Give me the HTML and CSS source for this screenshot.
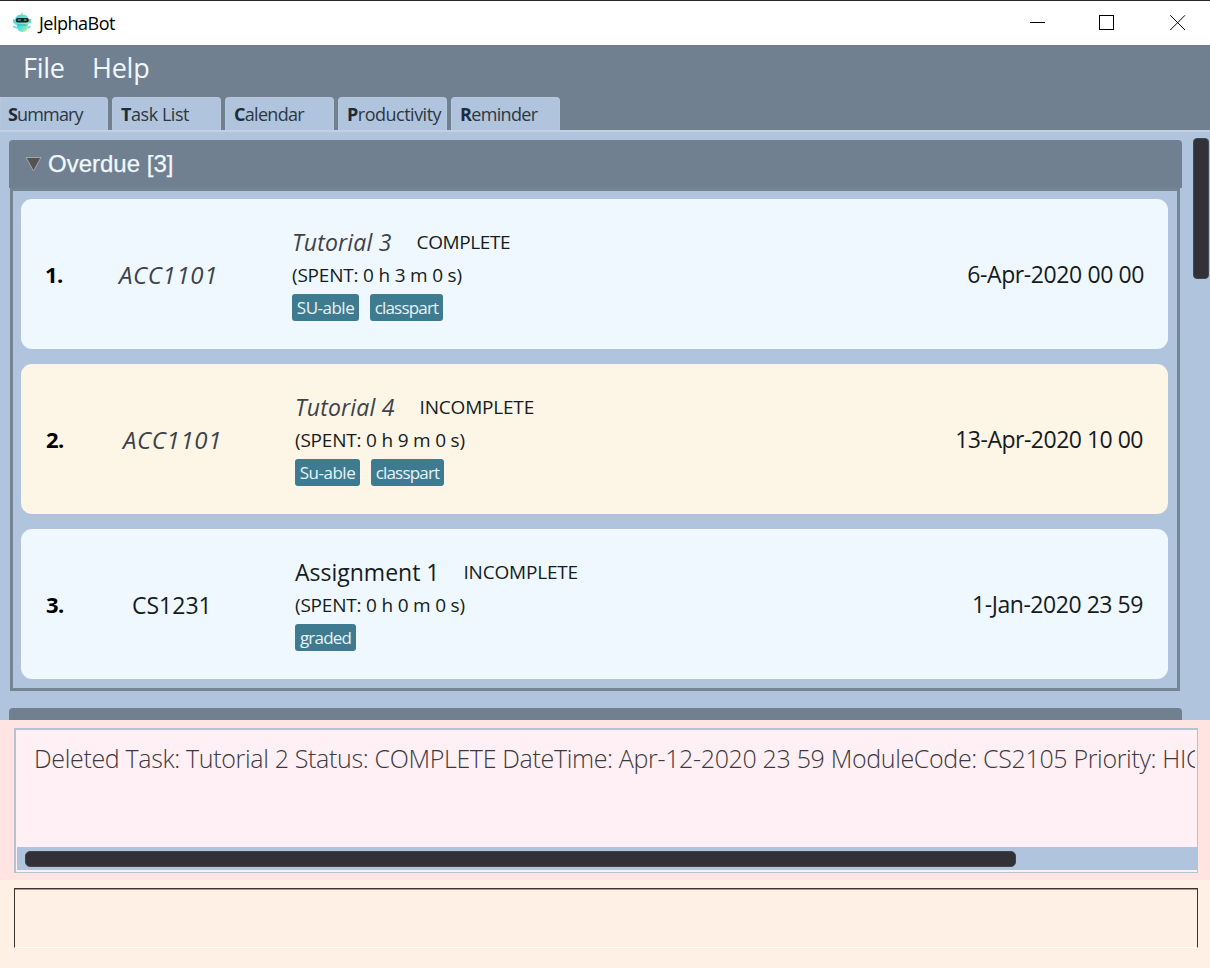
FILE: index.html
```html
<!DOCTYPE html>
<html lang="en">
<head>
<meta charset="utf-8">
<title>JelphaBot</title>
<link rel="stylesheet" href="styles.css">
</head>
<body>
<div class="window">
  <header class="titlebar">
    <svg class="logo" viewBox="0 0 20 23" width="20" height="23">
      <defs>
        <linearGradient id="bot" x1="0" y1="0" x2="1" y2="0.7">
          <stop offset="0" stop-color="#43cfe2"/>
          <stop offset="0.55" stop-color="#62e2cf"/>
          <stop offset="1" stop-color="#a9ef9d"/>
        </linearGradient>
      </defs>
      <path d="M9.200 1.500h1.600v3H9.200z" fill="#b6ed9a"/>
      <path d="M3 10c0-4.500 3-6.500 7-6.500s7 2 7 6.500v3.500H3z" fill="url(#bot)"/>
      <path d="M.8 8.500h2.400v4H1.500zM17 8h2v4h-2z" fill="#55d5dc"/>
      <rect x="3.800" y="7" width="13" height="4.600" rx="2" fill="#14242b"/>
      <path d="M5.800 9h3M12 9h2.500" stroke="#a8c4c8" stroke-width="1"/>
      <path d="M4.500 13h11.500c0 5-2 8-5.500 8s-6-3-6-8z" fill="url(#bot)"/>
      <path d="M1 15.500l4 1.500M15.500 17l3-1.500" stroke="#62dbe2" stroke-width="1.500"/>
      <path d="M5.500 14h9" stroke="#2cb5c8" stroke-width="1"/>
    </svg>
    <span class="app-name">JelphaBot</span>
    <svg class="controls" viewBox="0 0 156 16" width="156" height="16" fill="none" stroke="#000" stroke-width="1">
      <path d="M0 7.500h15"/>
      <rect x="69.500" y="0.500" width="14" height="14"/>
      <path d="M140.300 .3l14.700 14.700M155 .3L140.300 15"/>
    </svg>
  </header>
  <nav class="menubar"><span class="menu-file">File</span><span class="menu-help">Help</span></nav>
  <nav class="tabs">
    <div class="tab tab-first"><span class="t-summary"><b>S</b>ummary</span></div>
    <div class="tab"><span class="t-tasks"><b>T</b>ask List</span></div>
    <div class="tab"><span class="t-calendar"><b>C</b>alendar</span></div>
    <div class="tab"><span class="t-productivity"><b>P</b>roductivity</span></div>
    <div class="tab"><span class="t-reminder"><b>R</b>eminder</span></div>
  </nav>
  <main class="content">
    <div class="panels">
      <section class="panel">
        <h2 class="panel-head">
          <svg class="arrow" viewBox="0 0 17 16" width="17" height="16"><path d="M1 1.500h15L8.500 15z" fill="#555453" stroke="#a2a6a9" stroke-width="1"/></svg>
          <span>Overdue [3]</span>
        </h2>
        <div class="panel-body">
          <article class="card card-shift">
            <div class="num">1.</div>
            <div class="code low">ACC1101</div>
            <div class="info">
              <div class="line"><span class="title low">Tutorial 3</span><span class="status done">COMPLETE</span></div>
              <div class="spent">(SPENT: 0 h 3 m 0 s)</div>
              <div class="tags"><span class="tag w67">SU-able</span><span class="tag w73">classpart</span></div>
            </div>
            <time class="date">6-Apr-2020 00 00</time>
          </article>
          <article class="card card-cream">
            <div class="num">2.</div>
            <div class="code low">ACC1101</div>
            <div class="info">
              <div class="line"><span class="title low">Tutorial 4</span><span class="status">INCOMPLETE</span></div>
              <div class="spent">(SPENT: 0 h 9 m 0 s)</div>
              <div class="tags"><span class="tag w65">Su-able</span><span class="tag w73">classpart</span></div>
            </div>
            <time class="date">13-Apr-2020 10 00</time>
          </article>
          <article class="card">
            <div class="num">3.</div>
            <div class="code">CS1231</div>
            <div class="info">
              <div class="line"><span class="title">Assignment 1</span><span class="status">INCOMPLETE</span></div>
              <div class="spent">(SPENT: 0 h 0 m 0 s)</div>
              <div class="tags"><span class="tag w61">graded</span></div>
            </div>
            <time class="date">1-Jan-2020 23 59</time>
          </article>
        </div>
      </section>
      <div class="next-head"></div>
    </div>
    <div class="vbar"><div class="vthumb"></div></div>
  </main>
  <section class="result">
    <div class="result-box">
      <div class="message"><span>Deleted Task: Tutorial 2 Status: COMPLETE DateTime: Apr-12-2020 23 59 ModuleCode: CS2105 Priority: HIG</span></div>
      <div class="hbar"><div class="hthumb"></div></div>
    </div>
  </section>
  <footer class="command"><div class="command-input"></div></footer>
</div>
</body>
</html>
```
FILE: styles.css
```css
* { box-sizing: border-box; }
body { margin: 0; font-family: "Open Sans", "Noto Sans", sans-serif; }
.window { width: 1210px; height: 968px; overflow: hidden; display: flex; flex-direction: column; background: #fff0e6; white-space: nowrap; }
.titlebar { height: 45px; background: #fff; border-top: 1px solid #2a2226; display: flex; align-items: flex-start; padding-left: 12px; flex: none; }
.logo { margin-top: 10px; }
.app-name { margin: 9px 0 0 7px; font-size: 18px; line-height: 26px; letter-spacing: -0.5px; color: #000; }
.controls { margin: 14px 24px 0 auto; }
.menubar { height: 52px; flex: none; background: #708090; color: #f0f8ff; font-size: 27px; line-height: 46px; padding-left: 23px; display: flex; gap: 27px; letter-spacing: -0.25px; }
.menu-file { width: 42px; }
.tabs { height: 33px; flex: none; background: #708090; display: flex; gap: 4px; }
.tab { width: 109px; height: 33px; background: #b0c4de; border-radius: 4px 4px 0 0; border: 1px solid #b8c8dc; border-bottom: 0; padding-left: 8px; font-size: 18px; line-height: 32px; color: #2d3742; }
.tab-first { width: 108px; padding-left: 7px; border-top-left-radius: 0; }
.tab b { font-weight: 700; color: #202b36; }
.t-summary { letter-spacing: -0.85px; }
.t-tasks { letter-spacing: -0.45px; }
.t-calendar { letter-spacing: -0.7px; }
.t-productivity { letter-spacing: -0.5px; }
.t-reminder { letter-spacing: -0.65px; }
.content { height: 590px; flex: none; background: #b0c4de; border-top: 2px solid #c3d0de; display: flex; overflow: hidden; }
.panels { width: 1183px; padding: 8px 0 0 9px; }
.panel { width: 1173px; }
.panel-head { margin: 0; height: 48px; background: #708090; border-radius: 4px 4px 0 0; display: flex; align-items: center; padding: 0 0 0 16px; gap: 6px; font: 400 24px/50px "Liberation Sans", Arial, sans-serif; color: #f0f8ff; -webkit-text-stroke: 0.25px #f0f8ff; }
.panel-body { margin-left: 1px; border: 3px solid #748593; padding: 8px 9px 8px 8px; display: flex; flex-direction: column; gap: 15px; height: 503px; width: 1170px; }
.card { height: 150px; flex: none; background: #f0f8ff; border-radius: 11px; display: flex; align-items: center; padding: 0 25px 0 24px; color: #151b20; }
.card-cream { background: #fdf5e6; }
.num { width: 54px; font-size: 22px; font-weight: 700; letter-spacing: -0.6px; color: #000; line-height: 30px; padding-left: 1px; }
.card-shift .num { padding-left: 0; }
.code { width: 196px; padding-left: 33px; font-size: 23px; line-height: 30px; margin-top: 1px; }
.low { font-style: italic; color: #3c4248; }
.code.low { padding-left: 24px; font-size: 24px; letter-spacing: 0.65px; }
.card-shift .code.low { padding-left: 20px; width: 193px; }
.info { width: 400px; margin-top: -2px; }
.line { display: flex; align-items: center; height: 34px; gap: 24px; }
.title { font-size: 23px; }
.title.low { letter-spacing: 0.2px; margin-right: 1px; }
.card-shift .title.low { margin-right: 1px; }
.status, .spent { font-size: 19px; letter-spacing: -0.2px; }
.status.done { letter-spacing: -0.4px; }
.spent { height: 35px; line-height: 32px; }
.tags { display: flex; gap: 11px; }
.tag { height: 27px; border-radius: 3px; background: #3e7b91; color: #e8f3f7; font-size: 17px; line-height: 27px; text-align: center; letter-spacing: -0.5px; }
.w61, .w73 { letter-spacing: -0.8px; }
.w61 { width: 61px; } .w65 { width: 65px; } .w67 { width: 67px; } .w73 { width: 73px; }
.date { margin-left: auto; font-size: 23px; line-height: 30px; letter-spacing: -0.45px; }
.card-shift .date { margin-right: -1px; letter-spacing: -0.4px; }
.card-cream .date { letter-spacing: -0.5px; }
.next-head { width: 1173px; height: 20px; margin-top: 17px; background: #708090; border-radius: 4px 4px 0 0; }
.vbar { padding: 6px 0 0 10px; }
.vthumb { width: 16px; height: 141px; border-radius: 4px; background: #323137; border: 1px solid #454850; }
.result { height: 160px; flex: none; background: #ffe4e1; padding: 8px 12px 8px 14px; }
.result-box { height: 145px; border: 2px solid #b5c3d2; border-right-width: 1px; border-bottom-width: 1px; background: #fff0f5; display: flex; flex-direction: column; }
.message { height: 117px; overflow: hidden; padding-left: 18px; margin-right: 2px; font-size: 25px; font-weight: 300; line-height: 56px; letter-spacing: -0.34px; color: #3c393d; }
.hbar { height: 23px; margin-left: 1px; padding: 4px 0 0 8px; background: #b0c4de; }
.hthumb { width: 991px; height: 16px; border-radius: 5px; background: #323137; border: 1px solid #42444c; }
.command { height: 88px; padding: 8px 12px 0 14px; background: #fff0e6; }
.command-input { height: 60px; border: 1px solid #3a3230; border-bottom: 1px solid #fffdfa; box-shadow: inset 0 1px #a39a94; }
```
